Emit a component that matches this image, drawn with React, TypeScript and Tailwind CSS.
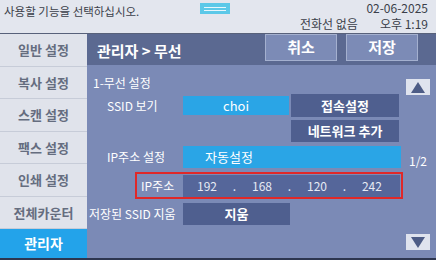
const font = { fontFamily: '"Noto Sans CJK KR", "Noto Sans", sans-serif' };

const menu = ['일반 설정', '복사 설정', '스캔 설정', '팩스 설정', '인쇄 설정', '전체카운터'];

function Btn({ children, className = '' }: { children: React.ReactNode; className?: string }) {
  return (
    <div className={`flex items-center justify-center text-[13px] font-bold text-white ${className}`}>
      {children}
    </div>
  );
}

function Arrow({ up }: { up?: boolean }) {
  return (
    <div className="flex h-[16px] w-[24px] items-center justify-center bg-[#dfe3ee]">
      <svg width="14" height="11" viewBox="0 0 14 11">
        <polygon points={up ? '7,0 14,11 0,11' : '0,0 14,0 7,11'} fill="#4d5c86" />
      </svg>
    </div>
  );
}

export default function App() {
  return (
    <div className="flex h-[260px] w-[436px] flex-col overflow-hidden bg-[#2d3650]" style={font}>
      {/* status bar */}
      <div className="relative flex h-[33px] shrink-0 bg-[#e3e6ee] text-[#3b3f4a]">
        <div className="pl-[4px] pt-[3px] text-[11.5px]">사용할 기능을 선택하십시오.</div>
        <div className="absolute left-[200px] top-[3px] flex h-[11px] w-[30px] flex-col justify-center gap-[2px] bg-[#5cc8e8] px-[4px]">
          <div className="h-px bg-[#e8f6fb]" />
          <div className="h-px bg-[#e8f6fb]" />
        </div>
        <div className="ml-auto flex flex-col items-end pr-[8px] text-[12px] leading-[16px]">
          <div>02-06-2025</div>
          <div className="flex gap-[22px]">
            <span>전화선 없음</span>
            <span>오후 1:19</span>
          </div>
        </div>
      </div>
      <div className="h-[1px] shrink-0 bg-[#58617a]" />

      <div className="flex min-h-0 flex-1 pb-[2px]">
        {/* sidebar */}
        <div className="flex w-[87px] shrink-0 flex-col bg-[#e0e3eb]">
          {menu.map((m) => (
            <div
              key={m}
              className="flex h-[32.5px] items-center justify-center border-b border-[#c7ccd8] text-[13px] font-bold text-[#656d7f]"
            >
              {m}
            </div>
          ))}
          <div className="flex flex-1 items-center justify-center bg-[#23a3ea] text-[14px] font-bold text-white">
            관리자
          </div>
        </div>

        {/* main */}
        <div className="flex min-w-0 flex-1 flex-col bg-[#7b8ab6]">
          <div className="flex h-[31px] shrink-0 items-start bg-[#5b6991]">
            <div className="pl-[10px] pt-[6px] text-[15px] font-bold text-white">관리자 &gt; 무선</div>
            <div className="ml-auto flex gap-[9px] pr-[18px]">
              <Btn className="h-[27px] w-[72px] border border-[#a4b0cf] bg-[#7c8bb6] text-[15px]">취소</Btn>
              <Btn className="h-[27px] w-[72px] border border-[#a4b0cf] bg-[#7c8bb6] text-[15px]">저장</Btn>
            </div>
          </div>

          <div className="flex flex-1">
            <div className="flex w-[316px] flex-col pt-[9px] text-[12px] text-white">
              <div className="h-[19px] pl-[6px]">1-무선 설정</div>
              <div className="flex h-[25px] items-center">
                <div className="w-[96px] pl-[20px]">SSID 보기</div>
                <Btn className="h-[19px] w-[106px] bg-[#2aa5e6] font-normal">choi</Btn>
                <Btn className="ml-[2px] h-[23px] w-[108px] bg-[#4f5f8f]">접속설정</Btn>
              </div>
              <div className="flex h-[25px] items-center">
                <Btn className="ml-[204px] h-[22px] w-[108px] bg-[#4f5f8f]">네트워크 추가</Btn>
              </div>
              <div className="mt-[2px] flex h-[24px] items-center">
                <div className="w-[96px] pl-[20px]">IP주소 설정</div>
                <Btn className="h-[22px] w-[218px] justify-start bg-[#2aa5e6] pl-[22px] font-normal">자동설정</Btn>
              </div>
              <div className="ml-[48px] mt-[3px] flex h-[27px] items-center border-2 border-[#e02828]">
                <div className="w-[46px] pl-[4px]">IP주소</div>
                <div className="flex h-[22px] w-[217px] items-center justify-between bg-[#55669a] pl-[14px] pr-[18px] text-[12px] text-[#e6eaf4]">
                  <span>192</span>
                  <span>.</span>
                  <span>168</span>
                  <span>.</span>
                  <span>120</span>
                  <span>.</span>
                  <span>242</span>
                </div>
              </div>
              <div className="mt-[3px] flex h-[23px] items-center">
                <div className="w-[96px] pl-[2px]">저장된 SSID 지움</div>
                <Btn className="h-[22px] w-[107px] bg-[#4f5f8f]">지움</Btn>
              </div>
            </div>

            <div className="flex flex-1 flex-col items-center pt-[14px] pr-[3px] text-[12px] text-white">
              <Arrow up />
              <div className="mt-[57px]">1/2</div>
              <div className="mt-[64px]">
                <Arrow />
              </div>
            </div>
          </div>
        </div>
      </div>
    </div>
  );
}
